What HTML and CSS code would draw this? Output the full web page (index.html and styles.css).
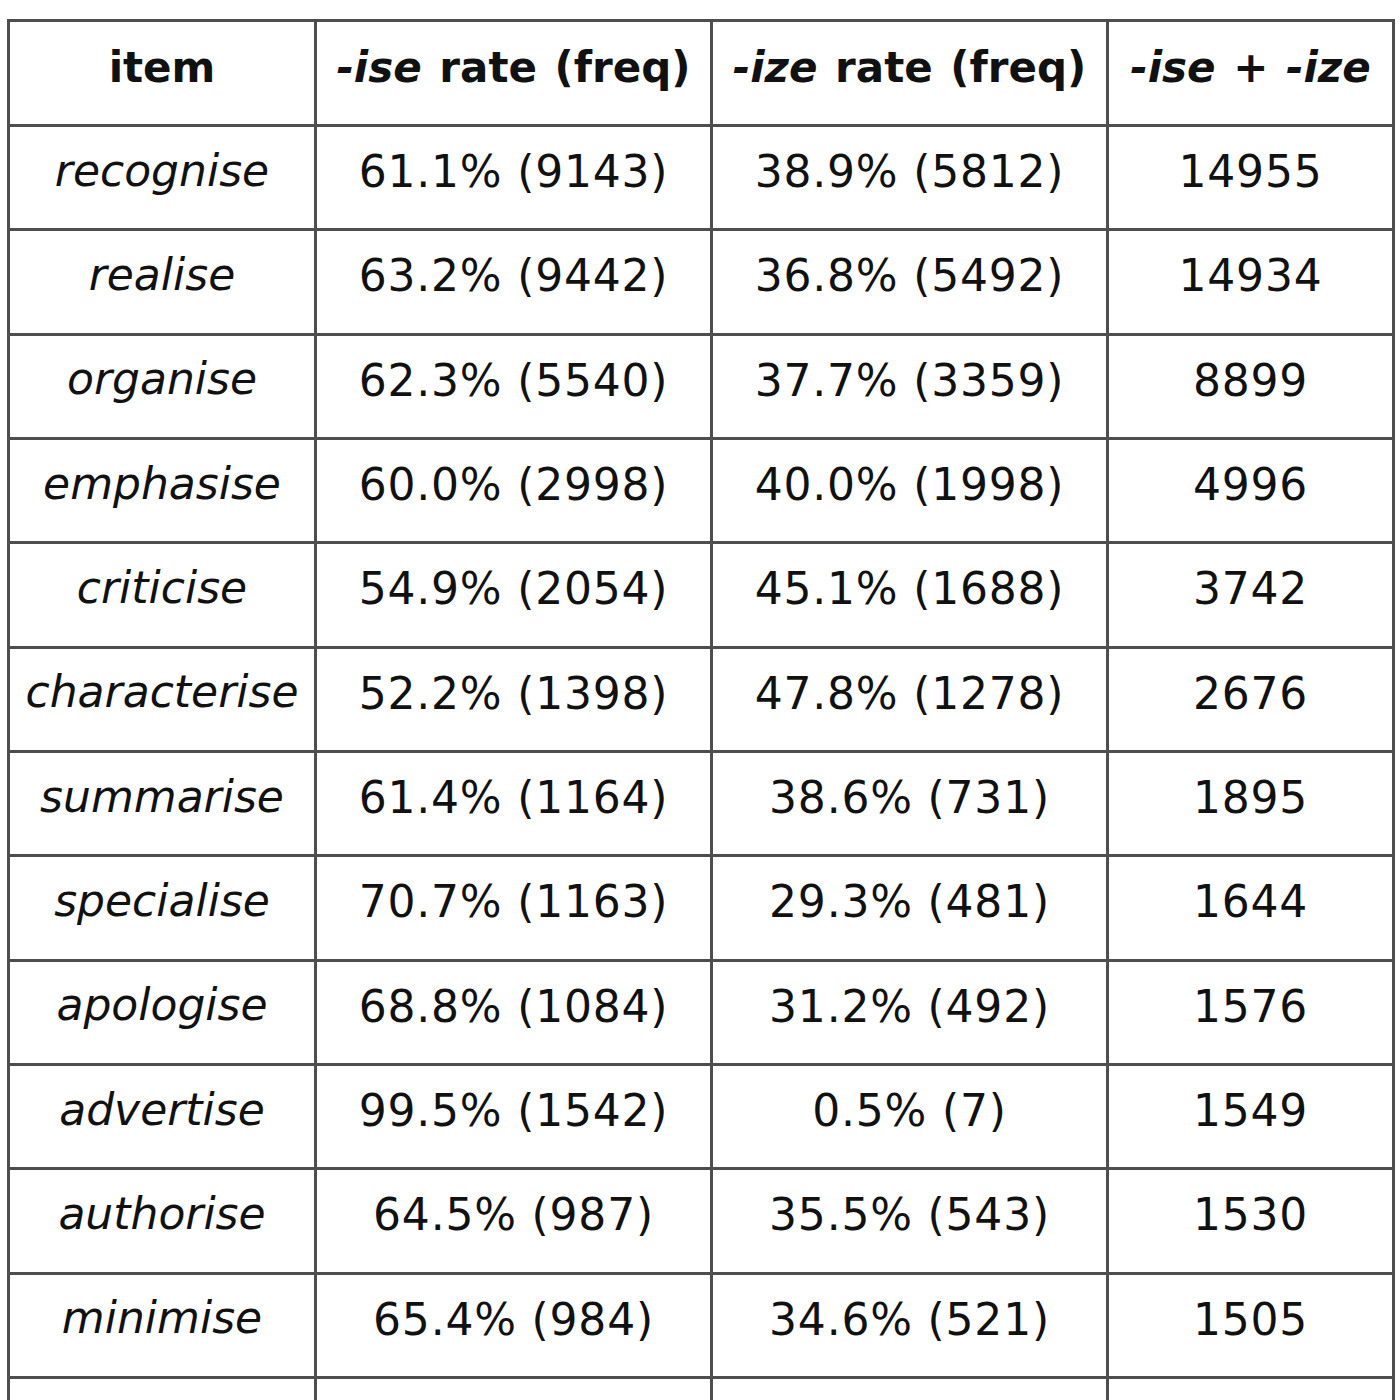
FILE: index.html
```html
<!DOCTYPE html>
<html lang="en">
<head>
<meta charset="utf-8">
<title>-ise vs -ize</title>
<link rel="stylesheet" href="styles.css">
</head>
<body>
<table class="rates">
  <colgroup>
    <col class="c-item">
    <col class="c-ise">
    <col class="c-ize">
    <col class="c-sum">
  </colgroup>
  <thead>
    <tr>
      <th>item</th>
      <th><i>-ise</i> rate (freq)</th>
      <th><i>-ize</i> rate (freq)</th>
      <th><i>-ise</i> + <i>-ize</i></th>
    </tr>
  </thead>
  <tbody>
    <tr><td class="word">recognise</td><td>61.1% (9143)</td><td>38.9% (5812)</td><td>14955</td></tr>
    <tr><td class="word">realise</td><td>63.2% (9442)</td><td>36.8% (5492)</td><td>14934</td></tr>
    <tr><td class="word">organise</td><td>62.3% (5540)</td><td>37.7% (3359)</td><td>8899</td></tr>
    <tr><td class="word">emphasise</td><td>60.0% (2998)</td><td>40.0% (1998)</td><td>4996</td></tr>
    <tr><td class="word">criticise</td><td>54.9% (2054)</td><td>45.1% (1688)</td><td>3742</td></tr>
    <tr><td class="word">characterise</td><td>52.2% (1398)</td><td>47.8% (1278)</td><td>2676</td></tr>
    <tr><td class="word">summarise</td><td>61.4% (1164)</td><td>38.6% (731)</td><td>1895</td></tr>
    <tr><td class="word">specialise</td><td>70.7% (1163)</td><td>29.3% (481)</td><td>1644</td></tr>
    <tr><td class="word">apologise</td><td>68.8% (1084)</td><td>31.2% (492)</td><td>1576</td></tr>
    <tr><td class="word">advertise</td><td>99.5% (1542)</td><td>0.5% (7)</td><td>1549</td></tr>
    <tr><td class="word">authorise</td><td>64.5% (987)</td><td>35.5% (543)</td><td>1530</td></tr>
    <tr><td class="word">minimise</td><td>65.4% (984)</td><td>34.6% (521)</td><td>1505</td></tr>
    <tr><td class="word"></td><td></td><td></td><td></td></tr>
  </tbody>
</table>
</body>
</html>
```
FILE: styles.css
```css
html, body {
  background: #ffffff;
}
body {
  margin: 19px 0 0 7px;
  color: #111111;
  font-family: "DejaVu Sans", Verdana, sans-serif;
}
.rates {
  border-collapse: collapse;
  table-layout: fixed;
  width: 1385px;
  border: 3px solid #4e4e4e;
}
.c-item { width: 307px; }
.c-ise { width: 396px; }
.c-ize { width: 396px; }
.c-sum { width: 286px; }
.rates th,
.rates td {
  border: 3px solid #4e4e4e;
  padding: 0 0 12px 0;
  text-align: center;
  vertical-align: middle;
  white-space: nowrap;
  overflow: hidden;
}
.rates thead tr { height: 105px; }
.rates tbody tr { height: 104.33px; }
.rates th {
  font-weight: 700;
  font-size: 42px;
  word-spacing: 3px;
  padding-bottom: 11px;
}
.rates td {
  font-size: 44px;
  letter-spacing: 0.8px;
}
.rates td.word {
  font-style: italic;
  letter-spacing: 0;
  padding-bottom: 15px;
}
```
